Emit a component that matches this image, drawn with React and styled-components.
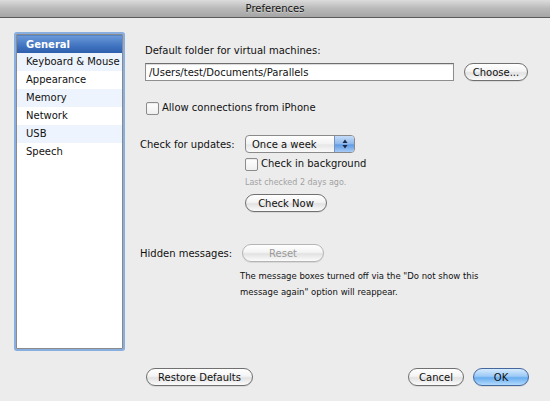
import React from 'react';
import styled, { createGlobalStyle } from 'styled-components';

const GlobalStyle = createGlobalStyle`
  html, body {
    margin: 0;
    padding: 0;
    background: #ececec;
  }
  body {
    font-family: "DejaVu Sans", "Liberation Sans", sans-serif;
    font-size: 10px;
    color: #111;
  }
`;

const SECTIONS = [
  'General',
  'Keyboard & Mouse',
  'Appearance',
  'Memory',
  'Network',
  'USB',
  'Speech',
];

const App = () => (
  <Window>
    <GlobalStyle />
    <TitleBar>Preferences</TitleBar>
    <Middle>
      <Sidebar>
        {SECTIONS.map((name, i) => (
          <SidebarRow key={name} selected={i === 0} odd={i % 2 === 1}>
            {name}
          </SidebarRow>
        ))}
      </Sidebar>
      <Content>
        <FieldLabel>Default folder for virtual machines:</FieldLabel>
        <FolderRow>
          <TextField value="/Users/test/Documents/Parallels" readOnly />
          <PillButton width={64}>Choose...</PillButton>
        </FolderRow>
        <CheckRow indent={6} top={20}>
          <CheckBox />
          <span>Allow connections from iPhone</span>
        </CheckRow>

        <FormRow top={20}>
          <RowLabel>Check for updates:</RowLabel>
          <Popup>
            <span>Once a week</span>
            <PopupArrows>
              <svg width="6" height="10" viewBox="0 0 6 10">
                <path d="M3 0.5 L5.5 4 H0.5 Z" fill="#1c2a44" />
                <path d="M3 9.5 L5.5 6 H0.5 Z" fill="#1c2a44" />
              </svg>
            </PopupArrows>
          </Popup>
        </FormRow>
        <Indented>
          <CheckRow top={4}>
            <CheckBox />
            <span>Check in background</span>
          </CheckRow>
          <Hint>Last checked 2 days ago.</Hint>
          <PillButton width={82} top={7}>Check Now</PillButton>
        </Indented>

        <FormRow top={32}>
          <RowLabel narrow>Hidden messages:</RowLabel>
          <PillButton width={82} disabled>Reset</PillButton>
        </FormRow>
        <Note>
          The message boxes turned off via the "Do not show this
          <br />
          message again" option will reappear.
        </Note>
      </Content>
    </Middle>
    <Footer>
      <PillButton width={107}>Restore Defaults</PillButton>
      <FooterRight>
        <PillButton width={56}>Cancel</PillButton>
        <PillButton width={56} primary>OK</PillButton>
      </FooterRight>
    </Footer>
  </Window>
);

export default App;

const Window = styled.div`
  width: 550px;
  height: 401px;
  display: flex;
  flex-direction: column;
  background: #ececec;
  overflow: hidden;
`;

const TitleBar = styled.div`
  height: 17px;
  line-height: 17px;
  text-align: center;
  font-size: 10px;
  color: #111;
  background: linear-gradient(#dcdcdc, #b9b9b9 50%, #a5a5a5);
  border-bottom: 1px solid #5a5a5a;
  text-shadow: 0 1px 0 rgba(255, 255, 255, 0.4);
`;

const Middle = styled.div`
  display: flex;
  padding: 15px 0 0 15px;
`;

const Sidebar = styled.div`
  width: 105px;
  height: 313px;
  background: #fff;
  border: 1px solid #8a8a8a;
  box-shadow: 0 0 0 2px #89aee0;
  border-radius: 1px;
  margin: 1px;
`;

const SidebarRow = styled.div`
  height: 18px;
  line-height: 18px;
  padding-left: 9px;
  font-size: 10px;
  white-space: nowrap;
  color: ${(p) => (p.selected ? '#fff' : '#111')};
  font-weight: ${(p) => (p.selected ? 'bold' : 'normal')};
  background: ${(p) =>
    p.selected
      ? 'linear-gradient(#6a99d8, #3f72c0 60%, #2f5fad)'
      : p.odd
      ? '#eef4fd'
      : '#fff'};
  border-top: ${(p) => (p.selected ? '1px solid #5585c8' : 'none')};
  box-sizing: border-box;
`;

const Content = styled.div`
  display: flex;
  flex-direction: column;
  align-items: flex-start;
  padding-left: 16px;
  padding-top: 11px;
  flex: 1;
`;

const FieldLabel = styled.div`
  margin-left: 5px;
  line-height: 14px;
`;

const FolderRow = styled.div`
  display: flex;
  align-items: center;
  gap: 10px;
  margin-top: 5px;
  margin-left: 5px;
`;

const TextField = styled.input`
  width: 309px;
  height: 18px;
  box-sizing: border-box;
  border: 1px solid #8e8e8e;
  border-top-color: #6e6e6e;
  box-shadow: inset 0 1px 1px rgba(0, 0, 0, 0.15);
  padding: 0 3px;
  font-family: inherit;
  font-size: 10px;
  color: #111;
  background: #fff;
  outline: none;
`;

const PillButton = styled.button`
  width: ${(p) => p.width}px;
  height: 18px;
  margin-top: ${(p) => p.top || 0}px;
  padding: 0;
  border-radius: 9px;
  border: 1px solid ${(p) => (p.primary ? '#44679d' : p.disabled ? '#b5b5b5' : '#707070')};
  font-family: inherit;
  font-size: 10px;
  color: ${(p) => (p.disabled ? '#9a9a9a' : '#111')};
  background: ${(p) =>
    p.primary
      ? 'linear-gradient(#d6eafd, #9ccaf6 45%, #6aaef0 55%, #b2dafc)'
      : 'linear-gradient(#ffffff, #f4f4f4 45%, #e2e2e2 55%, #fbfbfb)'};
  box-shadow: 0 1px 0 rgba(0, 0, 0, 0.08);
`;

const CheckRow = styled.label`
  display: flex;
  align-items: center;
  gap: 3px;
  margin-left: ${(p) => p.indent || 0}px;
  margin-top: ${(p) => p.top || 0}px;
  font-size: 10px;
  line-height: 14px;
`;

const CheckBox = styled.span`
  display: inline-block;
  width: 11px;
  height: 11px;
  border: 1px solid #8c8c8c;
  border-radius: 2px;
  background: linear-gradient(#fff, #efefef);
  box-shadow: inset 0 1px 1px rgba(0, 0, 0, 0.08);
`;

const FormRow = styled.div`
  display: flex;
  align-items: center;
  margin-top: ${(p) => p.top || 0}px;
`;

const RowLabel = styled.div`
  width: ${(p) => (p.narrow ? 102 : 105)}px;
  white-space: nowrap;
  font-size: 10px;
`;

const Popup = styled.div`
  width: 110px;
  height: 18px;
  box-sizing: border-box;
  display: flex;
  align-items: center;
  justify-content: space-between;
  border: 1px solid #8a8a8a;
  border-radius: 4px;
  background: linear-gradient(#ffffff, #f2f2f2 50%, #e6e6e6 55%, #fafafa);
  font-size: 10px;
  padding-left: 6px;
  overflow: hidden;
`;

const PopupArrows = styled.span`
  width: 19px;
  height: 100%;
  display: flex;
  align-items: center;
  justify-content: center;
  border-left: 1px solid #7592bd;
  background: linear-gradient(#c4dcf7, #8db8ec 50%, #5f9ae3 55%, #a7cbf6);
`;

const Indented = styled.div`
  display: flex;
  flex-direction: column;
  align-items: flex-start;
  margin-left: 105px;
`;

const Hint = styled.div`
  margin-top: 7px;
  font-size: 8px;
  color: #a2a2a2;
`;

const Note = styled.div`
  margin-top: 6px;
  margin-left: 100px;
  font-size: 8.5px;
  line-height: 16px;
  color: #111;
`;

const Footer = styled.div`
  display: flex;
  justify-content: space-between;
  align-items: center;
  margin-top: auto;
  padding: 0 21px 15px 146px;
`;

const FooterRight = styled.div`
  display: flex;
  gap: 9px;
`;
